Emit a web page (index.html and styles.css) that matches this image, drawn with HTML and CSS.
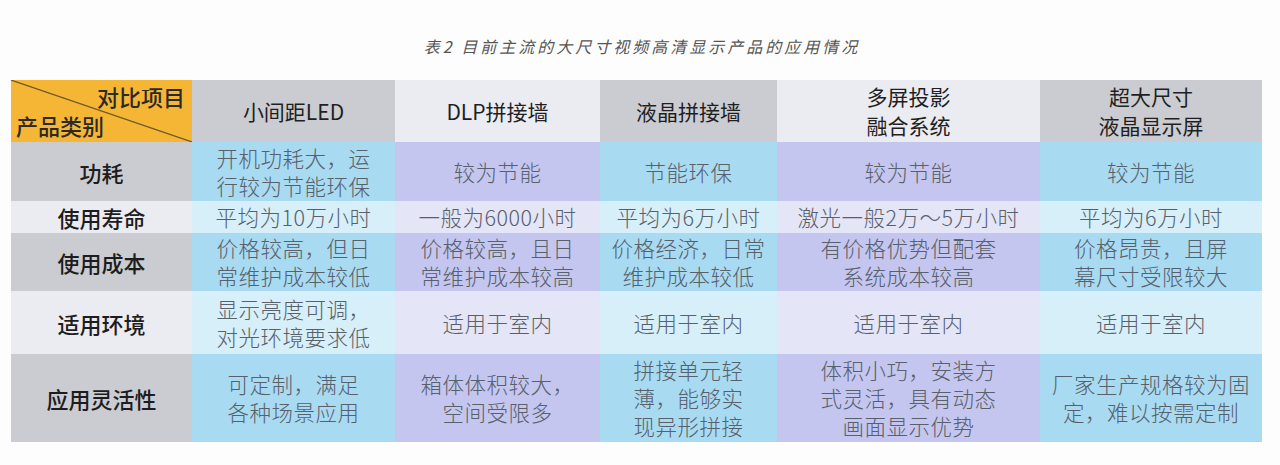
FILE: index.html
```html
<!DOCTYPE html>
<html lang="zh-CN">
<head>
<meta charset="utf-8">
<title>表2</title>
<link rel="stylesheet" href="styles.css">
</head>
<body>
<div class="page">
  <div class="caption">表2 目前主流的大尺寸视频高清显示产品的应用情况</div>
  <div class="table">
    <div class="cell corner">
      <svg class="diag" viewBox="0 0 181 62" preserveAspectRatio="none"><line x1="0" y1="0" x2="181" y2="62" stroke="#6e5a2a" stroke-width="1.2"/></svg>
      <span class="corner-top">对比项目</span>
      <span class="corner-bottom">产品类别</span>
    </div>
    <div class="cell head gray">小间距LED</div>
    <div class="cell head pale">DLP拼接墙</div>
    <div class="cell head gray">液晶拼接墙</div>
    <div class="cell head pale"><span class="line">多屏投影</span><span class="line">融合系统</span></div>
    <div class="cell head gray"><span class="line">超大尺寸</span><span class="line">液晶显示屏</span></div>

    <div class="cell rowhead gray">功耗</div>
    <div class="cell body blue">开机功耗大，运<br>行较为节能环保</div>
    <div class="cell body lav">较为节能</div>
    <div class="cell body blue">节能环保</div>
    <div class="cell body lav">较为节能</div>
    <div class="cell body blue">较为节能</div>

    <div class="cell rowhead pale">使用寿命</div>
    <div class="cell body blue-lt">平均为10万小时</div>
    <div class="cell body lav-lt">一般为6000小时</div>
    <div class="cell body blue-lt">平均为6万小时</div>
    <div class="cell body lav-lt">激光一般2万～5万小时</div>
    <div class="cell body blue-lt">平均为6万小时</div>

    <div class="cell rowhead gray">使用成本</div>
    <div class="cell body blue">价格较高，但日<br>常维护成本较低</div>
    <div class="cell body lav">价格较高，且日<br>常维护成本较高</div>
    <div class="cell body blue">价格经济，日常<br>维护成本较低</div>
    <div class="cell body lav">有价格优势但配套<br>系统成本较高</div>
    <div class="cell body blue">价格昂贵，且屏<br>幕尺寸受限较大</div>

    <div class="cell rowhead pale">适用环境</div>
    <div class="cell body blue-lt">显示亮度可调，<br>对光环境要求低</div>
    <div class="cell body lav-lt">适用于室内</div>
    <div class="cell body blue-lt">适用于室内</div>
    <div class="cell body lav-lt">适用于室内</div>
    <div class="cell body blue-lt">适用于室内</div>

    <div class="cell rowhead gray">应用灵活性</div>
    <div class="cell body blue">可定制，满足<br>各种场景应用</div>
    <div class="cell body lav">箱体体积较大，<br>空间受限多</div>
    <div class="cell body blue">拼接单元轻<br>薄，能够实<br>现异形拼接</div>
    <div class="cell body lav">体积小巧，安装方<br>式灵活，具有动态<br>画面显示优势</div>
    <div class="cell body blue">厂家生产规格较为固<br>定，难以按需定制</div>
  </div>
</div>
</body>
</html>
```

FILE: styles.css
```css
html, body {
  margin: 0;
  padding: 0;
  background: #fdfdfd;
}

.page {
  width: 1280px;
  height: 465px;
  padding-top: 36px;
  box-sizing: border-box;
  font-family: "Noto Sans CJK SC", "Noto Sans", sans-serif;
}

.caption {
  text-align: center;
  font-size: 16px;
  line-height: 20px;
  letter-spacing: 3px;
  color: #555555;
  font-style: italic;
  padding-left: 4px;
}

.table {
  margin: 24px 0 0 11px;
  display: grid;
  grid-template-columns: 181px 203px 205px 177px 263px 222px;
  grid-template-rows: 62px 59px 32px 58px 63px 88px;
  width: 1251px;
}

.cell {
  display: flex;
  align-items: center;
  justify-content: center;
  text-align: center;
}

.corner {
  position: relative;
  background: #f5b635;
  flex-direction: column;
  align-items: stretch;
  justify-content: space-between;
  padding: 2px 7px 3px 5px;
  box-sizing: border-box;
  font-size: 22px;
  line-height: 28px;
  color: #2c2a26;
  font-weight: 500;
}

.diag {
  position: absolute;
  left: 0;
  top: 0;
  width: 100%;
  height: 100%;
}

.corner-top {
  text-align: right;
  position: relative;
}

.corner-bottom {
  text-align: left;
  position: relative;
}

.head {
  flex-direction: column;
  font-size: 21px;
  line-height: 29px;
  color: #1f1f22;
  font-weight: 400;
}

.line {
  display: block;
  line-height: 29px;
}

.rowhead {
  font-size: 22px;
  color: #1d1d20;
  font-weight: 500;
}

.body {
  font-size: 21.5px;
  line-height: 28px;
  color: #58606b;
  font-weight: 300;
  letter-spacing: 0.5px;
}

.gray { background: #cbccd2; }
.pale { background: #ebecf2; }
.blue { background: #a8daf2; }
.lav { background: #c4c6ef; }
.blue-lt { background: #d6eff9; }
.lav-lt { background: #e4e5f6; }
```
